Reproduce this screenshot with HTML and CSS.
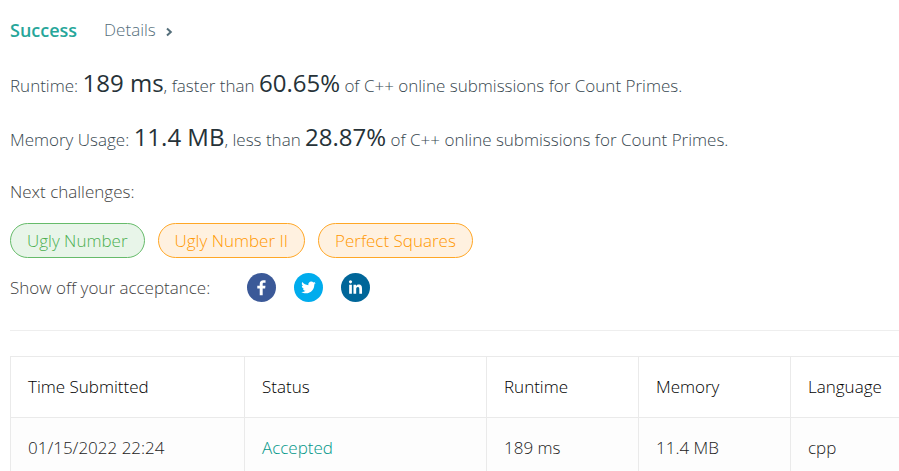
FILE: index.html
```html
<!DOCTYPE html>
<html lang="en">
<head>
  <meta charset="UTF-8" />
  <meta name="viewport" content="width=device-width, initial-scale=1.0" />
  <title>Count Primes - Submission</title>
  <link rel="stylesheet" href="styles.css">
</head>
<body>
  <main class="submission">
    <div class="result-header">
      <span class="result-status">Success</span>
      <a class="details-link" href="#details">
        Details
        <svg class="chevron" viewBox="0 0 8 10" aria-hidden="true"><path d="M2 1.5 5.8 5 2 8.5" /></svg>
      </a>
    </div>

    <p class="stat">Runtime: <span class="stat-value">189 ms</span>, faster than <span class="stat-value">60.65%</span> of C++ online submissions for Count Primes.</p>
    <p class="stat">Memory Usage: <span class="stat-value">11.4 MB</span>, less than <span class="stat-value">28.87%</span> of C++ online submissions for Count Primes.</p>

    <p class="next-title">Next challenges:</p>
    <div class="challenges">
      <a class="tag tag-easy" href="#ugly-number">Ugly Number</a>
      <a class="tag tag-medium" href="#ugly-number-ii">Ugly Number II</a>
      <a class="tag tag-medium" href="#perfect-squares">Perfect Squares</a>
    </div>

    <div class="share">
      <span class="share-label">Show off your acceptance:</span>
      <div class="share-links">
        <a class="share-link" href="#facebook" aria-label="Facebook">
          <svg viewBox="0 0 64 64">
            <circle cx="32" cy="32" r="32" fill="#3b5998" />
            <path fill="#fff" d="M34.6 49V34.1h5.4l.8-6h-6.2v-3.6c0-1.8.5-2.9 3-2.9h3.3v-5.4c-.6-.1-2.5-.3-4.8-.3-4.8 0-8 2.9-8 8.2v4H22.7v6h5.4V49z" />
          </svg>
        </a>
        <a class="share-link" href="#twitter" aria-label="Twitter">
          <svg viewBox="0 0 64 64">
            <circle cx="32" cy="32" r="32" fill="#00aced" />
            <path fill="#fff" d="M48 22.1c-1.2.5-2.4.9-3.8 1 1.4-.8 2.4-2.1 2.9-3.6-1.3.8-2.7 1.3-4.2 1.6-1.2-1.3-2.9-2.1-4.8-2.1-4.2 0-7.4 4-6.4 8-5.5-.3-10.3-2.9-13.5-6.9-1.7 2.9-.9 6.8 2 8.800-1.100 0-2.100-.3-3-.8 0 3 2.100 5.900 5.200 6.500-.9.3-2 .3-2.900.1.8 2.600 3.300 4.500 6.100 4.600-2.700 2.200-6.200 3.100-9.600 2.700 2.900 1.900 6.400 2.900 10.100 2.900 12.200 0 19.100-10.300 18.700-19.600 1.200-.9 2.400-2 3.200-3.200z" />
          </svg>
        </a>
        <a class="share-link" href="#linkedin" aria-label="LinkedIn">
          <svg viewBox="0 0 64 64">
            <circle cx="32" cy="32" r="32" fill="#006699" />
            <path fill="#fff" d="M18 46h6V26h-6zm3-30c-1.9 0-3.5 1.6-3.5 3.5S19.1 23 21 23s3.5-1.6 3.5-3.5S22.9 16 21 16zM39 25.5c-2.9 0-4.9 1.6-5.7 3.2h-.1V26H27.5v20h6v-9.9c0-2.6.5-5.1 3.7-5.1s3.2 3 3.2 5.3V46h6V35c0-5.4-1.2-9.5-7.4-9.5z" />
          </svg>
        </a>
      </div>
    </div>

    <div class="history">
      <table class="history-table">
        <thead>
          <tr>
            <th class="col-time">Time Submitted</th>
            <th class="col-status">Status</th>
            <th class="col-metric">Runtime</th>
            <th class="col-metric">Memory</th>
            <th>Language</th>
          </tr>
        </thead>
        <tbody>
          <tr>
            <td>01/15/2022 22:24</td>
            <td><a class="accepted" href="#submission">Accepted</a></td>
            <td>189 ms</td>
            <td>11.4 MB</td>
            <td>cpp</td>
          </tr>
        </tbody>
      </table>
    </div>
  </main>
</body>
</html>
```
FILE: styles.css
```css
* {
  box-sizing: border-box;
}

body {
  margin: 0;
  background: #fff;
  color: #424242;
  font-family: "Open Sans", "Noto Sans", sans-serif;
  font-size: 17px;
  font-weight: 300;
  line-height: 24px;
}

a {
  text-decoration: none;
}

p {
  margin: 0;
}

.submission {
  padding: 18px 0 0 10px;
}

.result-header {
  display: flex;
  align-items: center;
  gap: 27px;
  margin-bottom: 28px;
}

.result-status {
  color: #26a69a;
  font-size: 18px;
  font-weight: 600;
}

.details-link {
  display: flex;
  align-items: center;
  gap: 9px;
  color: #546e7a;
}

.chevron {
  width: 8px;
  height: 10px;
  margin-top: 4px;
  fill: none;
  stroke: #546e7a;
  stroke-width: 2;
}

.stat {
  margin-bottom: 22px;
  color: #37474f;
  line-height: 32px;
}

.stat-value {
  color: #263238;
  font-size: 24px;
  font-weight: 400;
  line-height: 24px;
}

.next-title {
  margin-bottom: 17px;
  line-height: 28px;
}

.challenges {
  display: flex;
  flex-wrap: wrap;
  gap: 13px;
  margin-bottom: 15px;
}

.tag {
  padding: 4px 16px;
  border: 1px solid;
  border-radius: 18px;
  line-height: 25px;
}

.tag-easy {
  background: #e8f5e9;
  border-color: #66bb6a;
  color: #4caf50;
}

.tag-medium {
  background: #fff1e0;
  border-color: #ffa726;
  color: #ff9800;
}

.share {
  display: flex;
  align-items: center;
  gap: 37px;
}

.share-links {
  display: flex;
  gap: 18px;
}

.share-link,
.share-link svg {
  display: block;
  width: 29px;
  height: 29px;
}

.history {
  margin-top: 28px;
  padding-top: 25px;
  border-top: 1px solid #eee;
}

.history-table {
  width: 100%;
  border-collapse: collapse;
  table-layout: fixed;
}

.history-table th,
.history-table td {
  height: 61px;
  padding: 0 17px;
  border: 1px solid #eaeaea;
  border-right: none;
  text-align: left;
}

.history-table th {
  color: #000;
  font-weight: 300;
}

.history-table td {
  background: #fdfdfd;
  color: #212121;
}

.col-time {
  width: 234px;
}

.col-status {
  width: 242px;
}

.col-metric {
  width: 152px;
}

.accepted {
  color: #009688;
}
```
